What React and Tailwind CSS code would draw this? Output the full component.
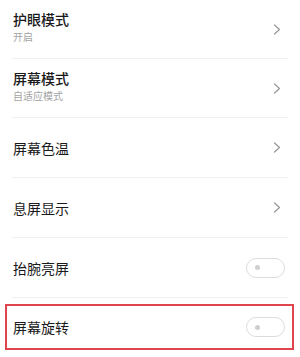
import React from "react";

const font = { fontFamily: '"Noto Sans CJK SC", "Noto Sans", sans-serif' };

function Chevron() {
  return (
    <svg width="8" height="11" viewBox="0 0 8 11" className="shrink-0">
      <path d="M1.5 1 L6.5 5.5 L1.5 10" fill="none" stroke="#9a9a9a" strokeWidth="1.3" strokeLinecap="round" strokeLinejoin="round" />
    </svg>
  );
}

function Toggle() {
  return (
    <div className="w-[39px] h-[20px] rounded-full border border-[#dcdcdc] bg-white flex items-center pl-[8px]">
      <div className="w-[5px] h-[5px] rounded-full bg-[#cfcfcf]" />
    </div>
  );
}

function Divider() {
  return <div className="h-px bg-[#f1f1f1] mx-[12px]" />;
}

function NavRow({ title, sub, h }) {
  if (sub) {
    return (
      <div className={`flex items-start justify-between pl-[13px] pr-[19px] ${h}`}>
        <div className="flex flex-col pt-[10px]">
          <div className="text-[14px] leading-[19px] font-medium text-[#1a1a1a]">{title}</div>
          <div className="mt-[1px] text-[10px] leading-[14px] text-[#a3a3a3]">{sub}</div>
        </div>
        <div className="self-center">
          <Chevron />
        </div>
      </div>
    );
  }
  return (
    <div className={`flex items-center justify-between pl-[13px] pr-[19px] ${h}`}>
      <div className="text-[14px] leading-[18px] text-[#1a1a1a]">{title}</div>
      <Chevron />
    </div>
  );
}

export default function App() {
  return (
    <div className="w-[300px] h-[357px] bg-white overflow-hidden" style={font}>
      <NavRow title="护眼模式" sub="开启" h="h-[58px]" />
      <Divider />
      <NavRow title="屏幕模式" sub="自适应模式" h="h-[58px]" />
      <Divider />
      <NavRow title="屏幕色温" h="h-[59px]" />
      <Divider />
      <NavRow title="息屏显示" h="h-[59px]" />
      <Divider />
      <div className="flex items-center justify-between pl-[13px] pr-[15px] h-[59px]">
        <div className="text-[14px] leading-[18px] text-[#1a1a1a]">抬腕亮屏</div>
        <Toggle />
      </div>
      <Divider />
      <div className="mt-[6px] ml-[5px] w-[289px] h-[46px] border-2 border-[#e0454e] flex items-center justify-between pl-[6px] pr-[7px]">
        <div className="text-[14px] leading-[18px] text-[#1a1a1a]">屏幕旋转</div>
        <Toggle />
      </div>
    </div>
  );
}
